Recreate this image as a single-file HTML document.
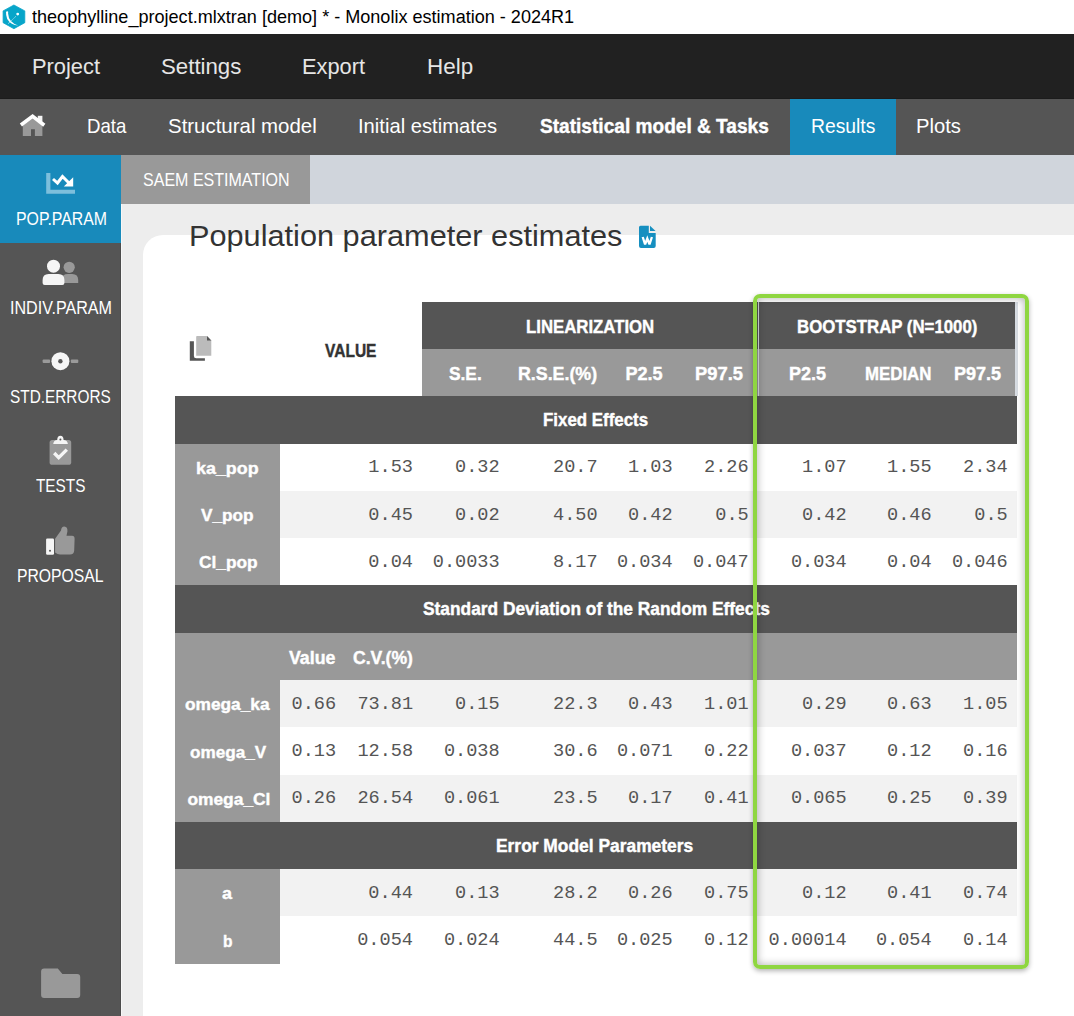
<!DOCTYPE html>
<html><head><meta charset="utf-8">
<style>
html,body{margin:0;padding:0;}
body{width:1074px;height:1016px;position:relative;overflow:hidden;background:#fff;font-family:"Liberation Sans",sans-serif;}
body>div{position:absolute;}
.t{white-space:pre;transform-origin:0 0;}
</style></head><body>
<div style="left:0px;top:0px;width:1074px;height:34px;background:#ffffff;"></div>
<svg style="position:absolute;left:0px;top:0px" width="30" height="34" viewBox="0 0 30 34"><polygon points="13.9,5 24.8,10.9 24.8,22.7 13.9,28.7 3.1,22.7 3.1,10.9" fill="#07a5c9" stroke="#07a5c9" stroke-width="0.8" stroke-linejoin="round"/><path d="M6,11.8 Q8.8,10 8.1,13.5 Q8.6,22.5 18.2,25.4 Q11,25.3 7.2,19 Q5.8,15 6,11.8 Z" fill="#fff"/><line x1="8" y1="23.8" x2="15.8" y2="16.4" stroke="#e6f6fa" stroke-width="0.9" stroke-dasharray="0.9 0.7"/><circle cx="17.7" cy="14.1" r="1.4" fill="#fff"/></svg>
<div class="t" style="left:31.93px;top:8.95px;font-size:17.66px;line-height:17.66px;color:#000;font-family:'Liberation Sans', sans-serif;font-weight:400;transform:scaleX(1.0230);">theophylline_project.mlxtran [demo] * - Monolix estimation - 2024R1</div>
<div style="left:0px;top:34px;width:1074px;height:65px;background:#212121;"></div>
<div style="left:0px;top:98px;width:1074px;height:1px;background:#1c1c1c;"></div>
<div class="t" style="left:32.13px;top:55.84px;font-size:22.61px;line-height:22.61px;color:#e6e6e6;font-family:'Liberation Sans', sans-serif;font-weight:400;transform:scaleX(0.9667);">Project</div>
<div class="t" style="left:160.62px;top:55.84px;font-size:22.61px;line-height:22.61px;color:#e6e6e6;font-family:'Liberation Sans', sans-serif;font-weight:400;transform:scaleX(0.9837);">Settings</div>
<div class="t" style="left:301.80px;top:55.84px;font-size:22.61px;line-height:22.61px;color:#e6e6e6;font-family:'Liberation Sans', sans-serif;font-weight:400;transform:scaleX(0.9654);">Export</div>
<div class="t" style="left:426.63px;top:55.84px;font-size:22.61px;line-height:22.61px;color:#e6e6e6;font-family:'Liberation Sans', sans-serif;font-weight:400;transform:scaleX(0.9915);">Help</div>
<div style="left:0px;top:99px;width:1074px;height:56px;background:#555555;"></div>
<div style="left:790px;top:99px;width:106px;height:56px;background:#188abb;"></div>
<svg style="position:absolute;left:15px;top:108px" width="35" height="32" viewBox="0 0 35 32"><path d="M7.8,17.5 L17.6,10.5 L27.4,17.5 L27.4,27.9 L19.9,27.9 L19.9,21.2 L16,21.2 L16,27.9 L7.8,27.9 Z" fill="#999"/><rect x="22.8" y="7.8" width="4.6" height="6" fill="#f4f4f4"/><polyline points="5.9,17 17.6,8.2 29.3,17.2" stroke="#fff" stroke-width="3.6" fill="none" stroke-linejoin="miter"/></svg>
<div class="t" style="left:87.20px;top:116.11px;font-size:20.14px;line-height:20.14px;color:#ffffff;font-family:'Liberation Sans', sans-serif;font-weight:400;transform:scaleX(0.9260);">Data</div>
<div class="t" style="left:168.32px;top:116.11px;font-size:20.14px;line-height:20.14px;color:#ffffff;font-family:'Liberation Sans', sans-serif;font-weight:400;transform:scaleX(1.0151);">Structural model</div>
<div class="t" style="left:357.93px;top:116.11px;font-size:20.14px;line-height:20.14px;color:#ffffff;font-family:'Liberation Sans', sans-serif;font-weight:400;transform:scaleX(1.0033);">Initial estimates</div>
<div class="t" style="left:539.61px;top:116.11px;font-size:20.14px;line-height:20.14px;color:#ffffff;font-family:'Liberation Sans', sans-serif;font-weight:700;transform:scaleX(0.9487);-webkit-text-stroke:0.4px currentColor;">Statistical model &amp; Tasks</div>
<div class="t" style="left:810.96px;top:116.11px;font-size:20.14px;line-height:20.14px;color:#ffffff;font-family:'Liberation Sans', sans-serif;font-weight:400;transform:scaleX(0.9595);">Results</div>
<div class="t" style="left:916.07px;top:116.11px;font-size:20.14px;line-height:20.14px;color:#ffffff;font-family:'Liberation Sans', sans-serif;font-weight:400;transform:scaleX(1.0041);">Plots</div>
<div style="left:0px;top:155px;width:121px;height:861px;background:#555555;"></div>
<div style="left:120px;top:155px;width:1px;height:861px;background:#4c4c4c;"></div>
<div style="left:0px;top:155px;width:121px;height:88px;background:#188abb;"></div>
<svg style="position:absolute;left:0px;top:155px" width="121" height="88" viewBox="0 0 121 88"><path d="M46.2,17.9 L50.4,17.9 L50.4,34.8 L75,34.8 L75,38.7 L46.2,38.7 Z" fill="#7dbfdc"/><polyline points="53,24 57.5,28 62.5,21.5 69.5,28.5" stroke="#fff" stroke-width="3" fill="none" stroke-linejoin="miter"/><polygon points="73.2,31.6 63.8,31.6 73.2,22.3" fill="#fff"/></svg>
<svg style="position:absolute;left:0px;top:243px" width="121" height="89" viewBox="0 0 121 89"><circle cx="69.2" cy="24.3" r="5.6" fill="#999"/><path d="M62,39.9 L62,36 Q62,30.9 68,30.9 L72.2,30.9 Q78.2,30.9 78.2,37 L78.2,39.9 Z" fill="#999"/><circle cx="53.5" cy="23.2" r="6.5" fill="#f5f5f5"/><path d="M42.6,40 L42.6,37 Q42.6,30.9 48.6,30.9 L58.4,30.9 Q64.4,30.9 64.4,37 L64.4,40 Q64.4,42 62.4,42 L44.6,42 Q42.6,42 42.6,40 Z" fill="#f5f5f5"/></svg>
<svg style="position:absolute;left:0px;top:332px" width="121" height="89" viewBox="0 0 121 89"><rect x="42.6" y="27.6" width="7.5" height="3.4" rx="1" fill="#9a9a9a"/><rect x="70.8" y="27.6" width="7.5" height="3.4" rx="1" fill="#9a9a9a"/><circle cx="60.4" cy="29.2" r="9" fill="#f5f5f5"/><circle cx="60.4" cy="29.2" r="2.2" fill="#555"/></svg>
<svg style="position:absolute;left:0px;top:421px" width="121" height="89" viewBox="0 0 121 89"><rect x="49.6" y="19" width="21.6" height="24.8" rx="2.6" fill="#999"/><path d="M53.2,22.9 Q53.8,19.3 57.2,19 Q57.4,14.8 60.4,14.8 Q63.4,14.8 63.6,19 Q67.3,19.3 67.9,22.9 Z" fill="#f5f5f5"/><circle cx="60.4" cy="18.6" r="1" fill="#555"/><polyline points="54.2,32 58.7,36.6 66.8,28.6" stroke="#f5f5f5" stroke-width="3.4" fill="none"/></svg>
<svg style="position:absolute;left:0px;top:510px" width="121" height="89" viewBox="0 0 121 89"><rect x="46.1" y="28.5" width="7.9" height="16.3" rx="1.2" fill="#f5f5f5"/><circle cx="50" cy="40.8" r="1" fill="#555"/><path d="M55.1,28.7 L61,20.5 Q61.4,16.6 64.3,16.6 Q67.8,16.8 67.4,21.5 L66.5,25.8 L72,25.8 Q74.7,25.9 74.6,29 L74.2,40.5 Q74,44.6 70,44.6 L60,44.6 Q57.5,44.5 55.1,42.5 Z" fill="#999"/></svg>
<svg style="position:absolute;left:0px;top:960px" width="121" height="56" viewBox="0 0 121 56"><path d="M41.1,11.6 Q41.1,8.6 44.1,8.6 L57.8,8.6 L62.4,13.9 L77.2,13.9 Q80.2,13.9 80.2,16.9 L80.2,35 Q80.2,38 77.2,38 L44.1,38 Q41.1,38 41.1,35 Z" fill="#999"/></svg>
<div class="t" style="left:15.87px;top:210.42px;font-size:18.41px;line-height:18.41px;color:#ffffff;font-family:'Liberation Sans', sans-serif;font-weight:400;transform:scaleX(0.8610);">POP.PARAM</div>
<div class="t" style="left:9.68px;top:299.18px;font-size:18.55px;line-height:18.55px;color:#ffffff;font-family:'Liberation Sans', sans-serif;font-weight:400;transform:scaleX(0.8689);">INDIV.PARAM</div>
<div class="t" style="left:10.31px;top:389.06px;font-size:17.97px;line-height:17.97px;color:#ffffff;font-family:'Liberation Sans', sans-serif;font-weight:400;transform:scaleX(0.8558);">STD.ERRORS</div>
<div class="t" style="left:36.26px;top:478.39px;font-size:17.97px;line-height:17.97px;color:#ffffff;font-family:'Liberation Sans', sans-serif;font-weight:400;transform:scaleX(0.8542);">TESTS</div>
<div class="t" style="left:17.11px;top:567.51px;font-size:17.54px;line-height:17.54px;color:#ffffff;font-family:'Liberation Sans', sans-serif;font-weight:400;transform:scaleX(0.8978);">PROPOSAL</div>
<div style="left:121px;top:155px;width:953px;height:49px;background:#d0d5dc;"></div>
<div style="left:121px;top:155px;width:189px;height:49px;background:#999999;"></div>
<div class="t" style="left:142.71px;top:170.02px;font-size:19.13px;line-height:19.13px;color:#ffffff;font-family:'Liberation Sans', sans-serif;font-weight:400;transform:scaleX(0.8389);">SAEM ESTIMATION</div>
<div style="left:121px;top:204px;width:953px;height:812px;background:#ededed;"></div>
<div style="left:121px;top:204px;width:1px;height:812px;background:#f7f7f7;"></div>
<div style="left:143px;top:235px;width:1000px;height:900px;background:#fff;border-top-left-radius:20px"></div>
<div class="t" style="left:188.92px;top:220.72px;font-size:30.29px;line-height:30.29px;color:#333333;font-family:'Liberation Sans', sans-serif;font-weight:400;transform:scaleX(1.0138);">Population parameter estimates</div>
<svg style="position:absolute;left:630px;top:220px" width="34" height="34" viewBox="0 0 34 34"><path d="M10.5,5.8 L18.8,5.8 L18.8,12.9 L25.7,12.9 L25.7,25.9 Q25.7,27.9 23.7,27.9 L11,27.9 Q9,27.9 9,25.9 L9,7.3 Q9,5.8 10.5,5.8 Z" fill="#168fc0"/><polygon points="20,5.8 25.6,10.9 20,10.9" fill="#168fc0"/><polyline points="12.7,17 15.1,24.4 17.3,18.6 19.5,24.4 21.9,17" stroke="#fff" stroke-width="2.3" fill="none" stroke-linejoin="miter" stroke-miterlimit="3"/></svg>
<svg style="position:absolute;left:180px;top:330px" width="40" height="40" viewBox="0 0 40 40"><path d="M9.8,11.2 L13.9,11.2 L13.9,26 Q13.9,28.3 16.2,28.3 L24.9,28.3 L24.9,30.7 L9.8,30.7 Z" fill="#555"/><path d="M17,6 L27,6 L31.3,10.6 L31.3,25.7 L16.2,25.7 L16.2,6.8 Q16.2,6 17,6 Z" fill="#bbb"/><polygon points="27,6 31.3,10.6 27,10.6" fill="#555"/></svg>
<div style="left:422px;top:301.7px;width:335.5px;height:47.29000000000002px;background:#555555;"></div>
<div style="left:757.5px;top:301.7px;width:257.5px;height:47.29000000000002px;background:#555555;"></div>
<div style="left:422px;top:348.99px;width:593px;height:47.289999999999964px;background:#999999;"></div>
<div style="left:1015px;top:301.7px;width:2.6000000000000227px;height:94.57999999999998px;background:#d7dce2;"></div>
<div style="left:758px;top:301.7px;width:1.2999999999999545px;height:94.57999999999998px;background:#d5d9de;"></div>
<div style="left:175px;top:396.28px;width:841.7px;height:47.29000000000002px;background:#555555;"></div>
<div style="left:175px;top:443.57px;width:105px;height:47.29000000000002px;background:#999999;"></div>
<div style="left:280px;top:443.57px;width:736.7px;height:47.29000000000002px;background:#ffffff;"></div>
<div style="left:175px;top:490.86px;width:105px;height:47.289999999999964px;background:#999999;"></div>
<div style="left:280px;top:490.86px;width:736.7px;height:47.289999999999964px;background:#f2f2f2;"></div>
<div style="left:175px;top:538.15px;width:105px;height:47.29000000000008px;background:#999999;"></div>
<div style="left:280px;top:538.15px;width:736.7px;height:47.29000000000008px;background:#ffffff;"></div>
<div style="left:175px;top:585.44px;width:841.7px;height:47.289999999999964px;background:#555555;"></div>
<div style="left:175px;top:632.73px;width:841.7px;height:47.289999999999964px;background:#999999;"></div>
<div style="left:175px;top:680.02px;width:105px;height:47.289999999999964px;background:#999999;"></div>
<div style="left:280px;top:680.02px;width:736.7px;height:47.289999999999964px;background:#f2f2f2;"></div>
<div style="left:175px;top:727.31px;width:105px;height:47.29000000000008px;background:#999999;"></div>
<div style="left:280px;top:727.31px;width:736.7px;height:47.29000000000008px;background:#ffffff;"></div>
<div style="left:175px;top:774.6px;width:105px;height:47.289999999999964px;background:#999999;"></div>
<div style="left:280px;top:774.6px;width:736.7px;height:47.289999999999964px;background:#f2f2f2;"></div>
<div style="left:175px;top:821.89px;width:841.7px;height:47.289999999999964px;background:#555555;"></div>
<div style="left:175px;top:869.18px;width:105px;height:47.29000000000008px;background:#999999;"></div>
<div style="left:280px;top:869.18px;width:736.7px;height:47.29000000000008px;background:#f2f2f2;"></div>
<div style="left:175px;top:916.47px;width:105px;height:47.289999999999964px;background:#999999;"></div>
<div style="left:280px;top:916.47px;width:736.7px;height:47.289999999999964px;background:#ffffff;"></div>
<div class="t" style="left:325.49px;top:342.47px;font-size:18.26px;line-height:18.26px;color:#333333;font-family:'Liberation Sans', sans-serif;font-weight:700;transform:scaleX(0.8505);-webkit-text-stroke:0.4px currentColor;">VALUE</div>
<div class="t" style="left:525.67px;top:318.18px;font-size:18.70px;line-height:18.70px;color:#ffffff;font-family:'Liberation Sans', sans-serif;font-weight:700;transform:scaleX(0.8972);-webkit-text-stroke:0.4px currentColor;">LINEARIZATION</div>
<div class="t" style="left:796.72px;top:318.88px;font-size:17.83px;line-height:17.83px;color:#ffffff;font-family:'Liberation Sans', sans-serif;font-weight:700;transform:scaleX(0.9425);-webkit-text-stroke:0.4px currentColor;">BOOTSTRAP (N=1000)</div>
<div class="t" style="left:448.77px;top:364.95px;font-size:18.12px;line-height:18.12px;color:#ffffff;font-family:'Liberation Sans', sans-serif;font-weight:700;transform:scaleX(0.9560);-webkit-text-stroke:0.4px currentColor;">S.E.</div>
<div class="t" style="left:518.41px;top:364.95px;font-size:18.12px;line-height:18.12px;color:#ffffff;font-family:'Liberation Sans', sans-serif;font-weight:700;transform:scaleX(0.9823);-webkit-text-stroke:0.4px currentColor;">R.S.E.(%)</div>
<div class="t" style="left:625.44px;top:364.95px;font-size:18.12px;line-height:18.12px;color:#ffffff;font-family:'Liberation Sans', sans-serif;font-weight:700;-webkit-text-stroke:0.4px currentColor;">P2.5</div>
<div class="t" style="left:694.61px;top:364.95px;font-size:18.12px;line-height:18.12px;color:#ffffff;font-family:'Liberation Sans', sans-serif;font-weight:700;transform:scaleX(1.0129);-webkit-text-stroke:0.4px currentColor;">P97.5</div>
<div class="t" style="left:789.01px;top:364.95px;font-size:18.12px;line-height:18.12px;color:#ffffff;font-family:'Liberation Sans', sans-serif;font-weight:700;transform:scaleX(0.9953);-webkit-text-stroke:0.4px currentColor;">P2.5</div>
<div class="t" style="left:865.34px;top:364.95px;font-size:18.12px;line-height:18.12px;color:#ffffff;font-family:'Liberation Sans', sans-serif;font-weight:700;transform:scaleX(0.9300);-webkit-text-stroke:0.4px currentColor;">MEDIAN</div>
<div class="t" style="left:953.81px;top:364.95px;font-size:18.12px;line-height:18.12px;color:#ffffff;font-family:'Liberation Sans', sans-serif;font-weight:700;transform:scaleX(0.9965);-webkit-text-stroke:0.4px currentColor;">P97.5</div>
<div class="t" style="left:543.46px;top:412.16px;font-size:17.83px;line-height:17.83px;color:#ffffff;font-family:'Liberation Sans', sans-serif;font-weight:700;transform:scaleX(0.9468);-webkit-text-stroke:0.4px currentColor;">Fixed Effects</div>
<div class="t" style="left:423.24px;top:601.47px;font-size:17.83px;line-height:17.83px;color:#ffffff;font-family:'Liberation Sans', sans-serif;font-weight:700;transform:scaleX(0.9725);-webkit-text-stroke:0.4px currentColor;">Standard Deviation of the Random Effects</div>
<div class="t" style="left:496.48px;top:838.32px;font-size:17.83px;line-height:17.83px;color:#ffffff;font-family:'Liberation Sans', sans-serif;font-weight:700;transform:scaleX(0.9756);-webkit-text-stroke:0.4px currentColor;">Error Model Parameters</div>
<div class="t" style="left:289.10px;top:649.80px;font-size:17.68px;line-height:17.68px;color:#ffffff;font-family:'Liberation Sans', sans-serif;font-weight:700;transform:scaleX(1.0040);-webkit-text-stroke:0.4px currentColor;">Value</div>
<div class="t" style="left:352.78px;top:649.80px;font-size:17.68px;line-height:17.68px;color:#ffffff;font-family:'Liberation Sans', sans-serif;font-weight:700;transform:scaleX(0.9945);-webkit-text-stroke:0.4px currentColor;">C.V.(%)</div>
<div class="t" style="left:195.92px;top:459.85px;font-size:17.39px;line-height:17.39px;color:#ffffff;font-family:'Liberation Sans', sans-serif;font-weight:700;transform:scaleX(1.0292);-webkit-text-stroke:0.4px currentColor;">ka_pop</div>
<div class="t" style="left:368.35px;top:459.42px;font-size:18.6px;line-height:18.6px;color:#555;font-family:'Liberation Mono', monospace;">1.53</div>
<div class="t" style="left:455.05px;top:459.42px;font-size:18.6px;line-height:18.6px;color:#555;font-family:'Liberation Mono', monospace;">0.32</div>
<div class="t" style="left:553.05px;top:459.42px;font-size:18.6px;line-height:18.6px;color:#555;font-family:'Liberation Mono', monospace;">20.7</div>
<div class="t" style="left:628.05px;top:459.42px;font-size:18.6px;line-height:18.6px;color:#555;font-family:'Liberation Mono', monospace;">1.03</div>
<div class="t" style="left:704.05px;top:459.42px;font-size:18.6px;line-height:18.6px;color:#555;font-family:'Liberation Mono', monospace;">2.26</div>
<div class="t" style="left:802.05px;top:459.42px;font-size:18.6px;line-height:18.6px;color:#555;font-family:'Liberation Mono', monospace;">1.07</div>
<div class="t" style="left:887.05px;top:459.42px;font-size:18.6px;line-height:18.6px;color:#555;font-family:'Liberation Mono', monospace;">1.55</div>
<div class="t" style="left:963.05px;top:459.42px;font-size:18.6px;line-height:18.6px;color:#555;font-family:'Liberation Mono', monospace;">2.34</div>
<div class="t" style="left:201.29px;top:507.04px;font-size:17.39px;line-height:17.39px;color:#ffffff;font-family:'Liberation Sans', sans-serif;font-weight:700;transform:scaleX(0.9908);-webkit-text-stroke:0.4px currentColor;">V_pop</div>
<div class="t" style="left:368.35px;top:506.71px;font-size:18.6px;line-height:18.6px;color:#555;font-family:'Liberation Mono', monospace;">0.45</div>
<div class="t" style="left:455.05px;top:506.71px;font-size:18.6px;line-height:18.6px;color:#555;font-family:'Liberation Mono', monospace;">0.02</div>
<div class="t" style="left:553.05px;top:506.71px;font-size:18.6px;line-height:18.6px;color:#555;font-family:'Liberation Mono', monospace;">4.50</div>
<div class="t" style="left:628.05px;top:506.71px;font-size:18.6px;line-height:18.6px;color:#555;font-family:'Liberation Mono', monospace;">0.42</div>
<div class="t" style="left:715.22px;top:506.71px;font-size:18.6px;line-height:18.6px;color:#555;font-family:'Liberation Mono', monospace;">0.5</div>
<div class="t" style="left:802.05px;top:506.71px;font-size:18.6px;line-height:18.6px;color:#555;font-family:'Liberation Mono', monospace;">0.42</div>
<div class="t" style="left:887.05px;top:506.71px;font-size:18.6px;line-height:18.6px;color:#555;font-family:'Liberation Mono', monospace;">0.46</div>
<div class="t" style="left:974.22px;top:506.71px;font-size:18.6px;line-height:18.6px;color:#555;font-family:'Liberation Mono', monospace;">0.5</div>
<div class="t" style="left:198.50px;top:554.05px;font-size:17.39px;line-height:17.39px;color:#ffffff;font-family:'Liberation Sans', sans-serif;font-weight:700;transform:scaleX(0.9968);-webkit-text-stroke:0.4px currentColor;">Cl_pop</div>
<div class="t" style="left:368.35px;top:554.00px;font-size:18.6px;line-height:18.6px;color:#555;font-family:'Liberation Mono', monospace;">0.04</div>
<div class="t" style="left:432.73px;top:554.00px;font-size:18.6px;line-height:18.6px;color:#555;font-family:'Liberation Mono', monospace;">0.0033</div>
<div class="t" style="left:553.05px;top:554.00px;font-size:18.6px;line-height:18.6px;color:#555;font-family:'Liberation Mono', monospace;">8.17</div>
<div class="t" style="left:616.89px;top:554.00px;font-size:18.6px;line-height:18.6px;color:#555;font-family:'Liberation Mono', monospace;">0.034</div>
<div class="t" style="left:692.89px;top:554.00px;font-size:18.6px;line-height:18.6px;color:#555;font-family:'Liberation Mono', monospace;">0.047</div>
<div class="t" style="left:790.89px;top:554.00px;font-size:18.6px;line-height:18.6px;color:#555;font-family:'Liberation Mono', monospace;">0.034</div>
<div class="t" style="left:887.05px;top:554.00px;font-size:18.6px;line-height:18.6px;color:#555;font-family:'Liberation Mono', monospace;">0.04</div>
<div class="t" style="left:951.89px;top:554.00px;font-size:18.6px;line-height:18.6px;color:#555;font-family:'Liberation Mono', monospace;">0.046</div>
<div class="t" style="left:185.25px;top:695.80px;font-size:17.39px;line-height:17.39px;color:#ffffff;font-family:'Liberation Sans', sans-serif;font-weight:700;transform:scaleX(0.9944);-webkit-text-stroke:0.4px currentColor;">omega_ka</div>
<div class="t" style="left:291.55px;top:695.87px;font-size:18.6px;line-height:18.6px;color:#555;font-family:'Liberation Mono', monospace;">0.66</div>
<div class="t" style="left:357.39px;top:695.87px;font-size:18.6px;line-height:18.6px;color:#555;font-family:'Liberation Mono', monospace;">73.81</div>
<div class="t" style="left:455.05px;top:695.87px;font-size:18.6px;line-height:18.6px;color:#555;font-family:'Liberation Mono', monospace;">0.15</div>
<div class="t" style="left:553.05px;top:695.87px;font-size:18.6px;line-height:18.6px;color:#555;font-family:'Liberation Mono', monospace;">22.3</div>
<div class="t" style="left:628.05px;top:695.87px;font-size:18.6px;line-height:18.6px;color:#555;font-family:'Liberation Mono', monospace;">0.43</div>
<div class="t" style="left:704.05px;top:695.87px;font-size:18.6px;line-height:18.6px;color:#555;font-family:'Liberation Mono', monospace;">1.01</div>
<div class="t" style="left:802.05px;top:695.87px;font-size:18.6px;line-height:18.6px;color:#555;font-family:'Liberation Mono', monospace;">0.29</div>
<div class="t" style="left:887.05px;top:695.87px;font-size:18.6px;line-height:18.6px;color:#555;font-family:'Liberation Mono', monospace;">0.63</div>
<div class="t" style="left:963.05px;top:695.87px;font-size:18.6px;line-height:18.6px;color:#555;font-family:'Liberation Mono', monospace;">1.05</div>
<div class="t" style="left:190.40px;top:743.90px;font-size:17.39px;line-height:17.39px;color:#ffffff;font-family:'Liberation Sans', sans-serif;font-weight:700;transform:scaleX(0.9857);-webkit-text-stroke:0.4px currentColor;">omega_V</div>
<div class="t" style="left:291.55px;top:743.16px;font-size:18.6px;line-height:18.6px;color:#555;font-family:'Liberation Mono', monospace;">0.13</div>
<div class="t" style="left:357.39px;top:743.16px;font-size:18.6px;line-height:18.6px;color:#555;font-family:'Liberation Mono', monospace;">12.58</div>
<div class="t" style="left:443.89px;top:743.16px;font-size:18.6px;line-height:18.6px;color:#555;font-family:'Liberation Mono', monospace;">0.038</div>
<div class="t" style="left:553.05px;top:743.16px;font-size:18.6px;line-height:18.6px;color:#555;font-family:'Liberation Mono', monospace;">30.6</div>
<div class="t" style="left:616.89px;top:743.16px;font-size:18.6px;line-height:18.6px;color:#555;font-family:'Liberation Mono', monospace;">0.071</div>
<div class="t" style="left:704.05px;top:743.16px;font-size:18.6px;line-height:18.6px;color:#555;font-family:'Liberation Mono', monospace;">0.22</div>
<div class="t" style="left:790.89px;top:743.16px;font-size:18.6px;line-height:18.6px;color:#555;font-family:'Liberation Mono', monospace;">0.037</div>
<div class="t" style="left:887.05px;top:743.16px;font-size:18.6px;line-height:18.6px;color:#555;font-family:'Liberation Mono', monospace;">0.12</div>
<div class="t" style="left:963.05px;top:743.16px;font-size:18.6px;line-height:18.6px;color:#555;font-family:'Liberation Mono', monospace;">0.16</div>
<div class="t" style="left:187.39px;top:790.90px;font-size:17.39px;line-height:17.39px;color:#ffffff;font-family:'Liberation Sans', sans-serif;font-weight:700;-webkit-text-stroke:0.4px currentColor;">omega_Cl</div>
<div class="t" style="left:291.55px;top:790.45px;font-size:18.6px;line-height:18.6px;color:#555;font-family:'Liberation Mono', monospace;">0.26</div>
<div class="t" style="left:357.39px;top:790.45px;font-size:18.6px;line-height:18.6px;color:#555;font-family:'Liberation Mono', monospace;">26.54</div>
<div class="t" style="left:443.89px;top:790.45px;font-size:18.6px;line-height:18.6px;color:#555;font-family:'Liberation Mono', monospace;">0.061</div>
<div class="t" style="left:553.05px;top:790.45px;font-size:18.6px;line-height:18.6px;color:#555;font-family:'Liberation Mono', monospace;">23.5</div>
<div class="t" style="left:628.05px;top:790.45px;font-size:18.6px;line-height:18.6px;color:#555;font-family:'Liberation Mono', monospace;">0.17</div>
<div class="t" style="left:704.05px;top:790.45px;font-size:18.6px;line-height:18.6px;color:#555;font-family:'Liberation Mono', monospace;">0.41</div>
<div class="t" style="left:790.89px;top:790.45px;font-size:18.6px;line-height:18.6px;color:#555;font-family:'Liberation Mono', monospace;">0.065</div>
<div class="t" style="left:887.05px;top:790.45px;font-size:18.6px;line-height:18.6px;color:#555;font-family:'Liberation Mono', monospace;">0.25</div>
<div class="t" style="left:963.05px;top:790.45px;font-size:18.6px;line-height:18.6px;color:#555;font-family:'Liberation Mono', monospace;">0.39</div>
<div class="t" style="left:222.45px;top:885.30px;font-size:17.39px;line-height:17.39px;color:#ffffff;font-family:'Liberation Sans', sans-serif;font-weight:700;transform:scaleX(1.0360);-webkit-text-stroke:0.4px currentColor;">a</div>
<div class="t" style="left:368.35px;top:885.03px;font-size:18.6px;line-height:18.6px;color:#555;font-family:'Liberation Mono', monospace;">0.44</div>
<div class="t" style="left:455.05px;top:885.03px;font-size:18.6px;line-height:18.6px;color:#555;font-family:'Liberation Mono', monospace;">0.13</div>
<div class="t" style="left:553.05px;top:885.03px;font-size:18.6px;line-height:18.6px;color:#555;font-family:'Liberation Mono', monospace;">28.2</div>
<div class="t" style="left:628.05px;top:885.03px;font-size:18.6px;line-height:18.6px;color:#555;font-family:'Liberation Mono', monospace;">0.26</div>
<div class="t" style="left:704.05px;top:885.03px;font-size:18.6px;line-height:18.6px;color:#555;font-family:'Liberation Mono', monospace;">0.75</div>
<div class="t" style="left:802.05px;top:885.03px;font-size:18.6px;line-height:18.6px;color:#555;font-family:'Liberation Mono', monospace;">0.12</div>
<div class="t" style="left:887.05px;top:885.03px;font-size:18.6px;line-height:18.6px;color:#555;font-family:'Liberation Mono', monospace;">0.41</div>
<div class="t" style="left:963.05px;top:885.03px;font-size:18.6px;line-height:18.6px;color:#555;font-family:'Liberation Mono', monospace;">0.74</div>
<div class="t" style="left:223.00px;top:932.66px;font-size:17.39px;line-height:17.39px;color:#ffffff;font-family:'Liberation Sans', sans-serif;font-weight:700;transform:scaleX(0.8940);-webkit-text-stroke:0.4px currentColor;">b</div>
<div class="t" style="left:357.19px;top:932.32px;font-size:18.6px;line-height:18.6px;color:#555;font-family:'Liberation Mono', monospace;">0.054</div>
<div class="t" style="left:443.89px;top:932.32px;font-size:18.6px;line-height:18.6px;color:#555;font-family:'Liberation Mono', monospace;">0.024</div>
<div class="t" style="left:553.05px;top:932.32px;font-size:18.6px;line-height:18.6px;color:#555;font-family:'Liberation Mono', monospace;">44.5</div>
<div class="t" style="left:616.89px;top:932.32px;font-size:18.6px;line-height:18.6px;color:#555;font-family:'Liberation Mono', monospace;">0.025</div>
<div class="t" style="left:704.05px;top:932.32px;font-size:18.6px;line-height:18.6px;color:#555;font-family:'Liberation Mono', monospace;">0.12</div>
<div class="t" style="left:768.57px;top:932.32px;font-size:18.6px;line-height:18.6px;color:#555;font-family:'Liberation Mono', monospace;">0.00014</div>
<div class="t" style="left:875.89px;top:932.32px;font-size:18.6px;line-height:18.6px;color:#555;font-family:'Liberation Mono', monospace;">0.054</div>
<div class="t" style="left:963.05px;top:932.32px;font-size:18.6px;line-height:18.6px;color:#555;font-family:'Liberation Mono', monospace;">0.14</div>
<div style="left:753.1px;top:294.2px;width:276.2px;height:674.8px;box-sizing:border-box;border:4.9px solid #8fd641;border-radius:7px;box-shadow:0 2px 5px rgba(0,0,0,0.3), inset 0 0 8px rgba(0,0,0,0.32)"></div>
</body></html>
